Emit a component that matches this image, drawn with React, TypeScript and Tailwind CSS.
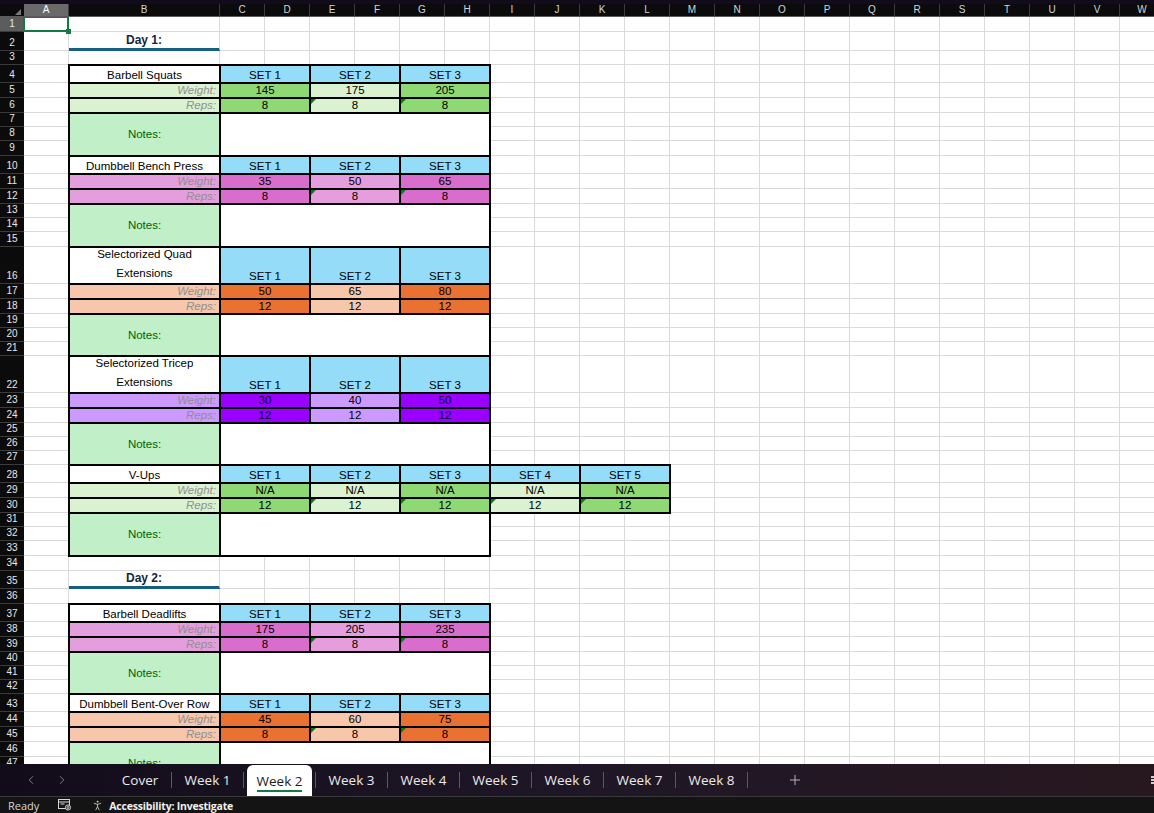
import type { ReactNode } from "react";
import { ChevronLeft, ChevronRight, Plus, PersonStanding } from "lucide-react";

const COLS = ["C", "D", "E", "F", "G", "H", "I", "J", "K", "L", "M", "N", "O", "P", "Q", "R", "S", "T", "U", "V", "W"];

type Tone = { dark: string; light: string };

const tones = {
  green: { dark: "bg-[#8ed973]", light: "bg-[#daf2d0]" },
  pink: { dark: "bg-[#d86dcd]", light: "bg-[#e59edd]" },
  orange: { dark: "bg-[#e97132]", light: "bg-[#f7c7ac]" },
  purple: { dark: "bg-[#9900ff]", light: "bg-[#cc99ff]" },
};

type Exercise = {
  start: number;
  name: string[];
  tone: Tone;
  weights: string[];
  reps: string[];
  flagged?: boolean;
  notes: string[];
};

const day1: Exercise[] = [
  { start: 4, name: ["Barbell Squats"], tone: tones.green, weights: ["145", "175", "205"], reps: ["8", "8", "8"], flagged: true, notes: ["h-[14px]", "h-[14px]", "h-[15px]"] },
  { start: 10, name: ["Dumbbell Bench Press"], tone: tones.pink, weights: ["35", "50", "65"], reps: ["8", "8", "8"], flagged: true, notes: ["h-[14px]", "h-[14px]", "h-[15px]"] },
  { start: 16, name: ["Selectorized Quad", "Extensions"], tone: tones.orange, weights: ["50", "65", "80"], reps: ["12", "12", "12"], notes: ["h-[14px]", "h-[14px]", "h-[14px]"] },
  { start: 22, name: ["Selectorized Tricep", "Extensions"], tone: tones.purple, weights: ["30", "40", "50"], reps: ["12", "12", "12"], notes: ["h-[14px]", "h-[14px]", "h-[14px]"] },
  { start: 28, name: ["V-Ups"], tone: tones.green, weights: ["N/A", "N/A", "N/A", "N/A", "N/A"], reps: ["12", "12", "12", "12", "12"], flagged: true, notes: ["h-[14px]", "h-[14px]", "h-[15px]"] },
];

const day2: Exercise[] = [
  { start: 37, name: ["Barbell Deadlifts"], tone: tones.pink, weights: ["175", "205", "235"], reps: ["8", "8", "8"], flagged: true, notes: ["h-[14px]", "h-[14px]", "h-[14px]"] },
  { start: 43, name: ["Dumbbell Bent-Over Row"], tone: tones.orange, weights: ["45", "60", "75"], reps: ["8", "8", "8"], flagged: true, notes: ["h-[15px]", "h-[14px]", "h-[14px]"] },
];

function RowHead({ n, selected }: { n: number; selected?: boolean }) {
  return (
    <div
      className={`flex w-[24px] shrink-0 items-end justify-center border-b border-[#3b3b3b] pb-[1px] text-[10px] leading-[12px] text-[#e8e8e8] ${
        selected ? "bg-[#5c5c5c]" : "bg-[#0b0b0b]"
      }`}
    >
      {n}
    </div>
  );
}

function Blank({ w = "w-[45px]" }: { w?: string }) {
  return <div className={`shrink-0 ${w} border-b border-r border-[#dadada] bg-white`} />;
}

function Blanks({ count }: { count: number }) {
  return (
    <>
      {Array.from({ length: count }, (_, i) => (
        <Blank key={i} />
      ))}
    </>
  );
}

function Row({ n, h, selected, children }: { n: number; h: string; selected?: boolean; children: ReactNode }) {
  return (
    <div className={`flex ${h}`}>
      <RowHead n={n} selected={selected} />
      {children}
    </div>
  );
}

function Box({
  w,
  bg,
  align = "items-end justify-center pb-[1px]",
  flag,
  children,
}: {
  w: string;
  bg: string;
  align?: string;
  flag?: boolean;
  children?: ReactNode;
}) {
  return (
    <div className={`relative flex shrink-0 ${w} ${bg} ${align} text-[11.5px] leading-[13px] text-black outline-2 -outline-offset-1 outline-black`}>
      {flag && (
        <span className="absolute left-[1px] top-[1px] h-0 w-0 border-r-[5px] border-t-[5px] border-r-transparent border-t-[#0b7a12]" />
      )}
      {children}
    </div>
  );
}

function NotesGroup({ start, heights }: { start: number; heights: string[] }) {
  return (
    <div className="flex">
      <div className="flex shrink-0 flex-col">
        {heights.map((h, i) => (
          <div key={i} className={`flex ${h}`}>
            <RowHead n={start + i} />
            <Blank />
          </div>
        ))}
      </div>
      <Box w="w-[151px]" bg="bg-[#c1f0c8]" align="items-center justify-center">
        <span className="text-[#006100]">Notes:</span>
      </Box>
      <Box w="w-[270px]" bg="bg-white" />
      <div className="flex shrink-0 flex-col">
        {heights.map((h, i) => (
          <div key={i} className={`flex ${h}`}>
            <Blanks count={15} />
          </div>
        ))}
      </div>
    </div>
  );
}

function ExerciseBlock({ ex }: { ex: Exercise }) {
  const rest = 21 - ex.weights.length * 2;
  const tall = ex.name.length > 1;
  return (
    <>
      <Row n={ex.start} h={tall ? "h-[37px]" : "h-[18px]"}>
        <Blank />
        <Box w="w-[151px]" bg="bg-white">
          <span className={`text-center ${tall ? "leading-[19px]" : ""}`}>
            {ex.name.map((line, i) => (
              <span key={i} className="block">
                {line}
              </span>
            ))}
          </span>
        </Box>
        {ex.weights.map((_, i) => (
          <Box key={i} w="w-[90px]" bg="bg-[#94dcf8]">
            SET {i + 1}
          </Box>
        ))}
        <Blanks count={rest} />
      </Row>
      <Row n={ex.start + 1} h="h-[15px]">
        <Blank />
        <Box w="w-[151px]" bg={ex.tone.light} align="items-end justify-end pb-[1px] pr-[4px]">
          <span className="italic text-[#8f8f8f]">Weight:</span>
        </Box>
        {ex.weights.map((v, i) => (
          <Box key={i} w="w-[90px]" bg={i % 2 === 0 ? ex.tone.dark : ex.tone.light}>
            {v}
          </Box>
        ))}
        <Blanks count={rest} />
      </Row>
      <Row n={ex.start + 2} h="h-[15px]">
        <Blank />
        <Box w="w-[151px]" bg={ex.tone.light} align="items-end justify-end pb-[1px] pr-[4px]">
          <span className="italic text-[#8f8f8f]">Reps:</span>
        </Box>
        {ex.reps.map((v, i) => (
          <Box key={i} w="w-[90px]" bg={i % 2 === 0 ? ex.tone.dark : ex.tone.light} flag={ex.flagged && i > 0}>
            {v}
          </Box>
        ))}
        <Blanks count={rest} />
      </Row>
      <NotesGroup start={ex.start + 3} heights={ex.notes} />
    </>
  );
}

function DayRow({ n, h, label }: { n: number; h: string; label: string }) {
  return (
    <Row n={n} h={h}>
      <Blank />
      <div className="flex w-[151px] shrink-0 items-end justify-center border-b-[3px] border-r border-b-[#156082] border-r-[#dadada] bg-white pb-[1px] text-[12px] font-bold leading-[14px] text-[#0e2841]">
        {label}
      </div>
      <Blanks count={21} />
    </Row>
  );
}

function EmptyRow({ n, h }: { n: number; h: string }) {
  return (
    <Row n={n} h={h}>
      <Blank />
      <Blank w="w-[151px]" />
      <Blanks count={21} />
    </Row>
  );
}

function ColumnHeaders() {
  return (
    <div className="flex h-[13px] shrink-0 border-b border-[#5a5a5a] bg-[#0b0b0b] text-[10px] leading-[12px] text-[#d4d4d4]">
      <div className="flex w-[24px] shrink-0 items-end justify-end pb-[1px] pr-[3px]">
        <span className="h-0 w-0 border-b-[6px] border-l-[6px] border-b-[#7a7a7a] border-l-transparent" />
      </div>
      <div className="flex w-[45px] shrink-0 items-center justify-center border-r border-[#3b3b3b] bg-[#6a6a6a] text-white">A</div>
      <div className="flex w-[151px] shrink-0 items-center justify-center border-r border-[#3b3b3b]">B</div>
      {COLS.map((c) => (
        <div key={c} className="flex w-[45px] shrink-0 items-center justify-center border-r border-[#3b3b3b]">
          {c}
        </div>
      ))}
    </div>
  );
}

const weeks = ["Week 1", "Week 2", "Week 3", "Week 4", "Week 5", "Week 6", "Week 7", "Week 8"];

function SheetTabs() {
  return (
    <div className="flex h-[32px] shrink-0 items-stretch bg-linear-to-r from-[#120c1a] via-[#1f1727] to-[#28171f] font-['Open_Sans',sans-serif] text-[13.5px] text-[#ececec]">
      <div className="flex w-[109px] shrink-0 items-center gap-[17px] pl-[24px] text-[#8c8c8c]">
        <ChevronLeft size={14} strokeWidth={1.5} />
        <ChevronRight size={14} strokeWidth={1.5} />
      </div>
      <div className="flex w-[62px] shrink-0 items-center justify-center">Cover</div>
      <span className="h-[16px] w-px self-center bg-[#5b5b5b]" />
      {weeks.map((w) => (
        <div key={w} className="flex shrink-0 items-stretch">
          {w === "Week 2" ? (
            <div className="mx-[3px] mt-[1px] flex w-[65px] items-center justify-center rounded-t-[6px] bg-white text-[#1b1b1b]">
              <span className="mt-[4px] border-b-2 border-[#107c41] leading-[17px]">{w}</span>
            </div>
          ) : (
            <div className="flex w-[71px] items-center justify-center">{w}</div>
          )}
          <span className="h-[16px] w-px self-center bg-[#5b5b5b]" />
        </div>
      ))}
      <div className="ml-[39px] flex items-center text-[#d0d0d0]">
        <Plus size={16} strokeWidth={1.25} />
      </div>
      <div className="ml-auto flex flex-col justify-center gap-[1px]">
        <span className="h-[2px] w-[3px] bg-[#cfcfcf]" />
        <span className="h-[2px] w-[3px] bg-[#cfcfcf]" />
        <span className="h-[2px] w-[3px] bg-[#cfcfcf]" />
      </div>
    </div>
  );
}

function StatusBar() {
  return (
    <div className="flex h-[17px] shrink-0 items-center border-t border-[#3a3a3a] bg-[#141414] pl-[8px] font-['Open_Sans',sans-serif] text-[11px] leading-[14px] text-[#d8d8d8]">
      <span className="mt-[2px]">Ready</span>
      <svg className="ml-[19px]" width="14" height="12" viewBox="0 0 14 12" fill="none" stroke="#d8d8d8" strokeWidth="1">
        <rect x="0.5" y="0.5" width="11" height="9" />
        <line x1="0.5" y1="3" x2="11.5" y2="3" />
        <line x1="2.5" y1="5" x2="6.5" y2="5" />
        <circle cx="10" cy="8.5" r="2.6" fill="#141414" />
        <circle cx="10" cy="8.5" r="1" />
      </svg>
      <PersonStanding className="ml-[19px]" size={13} strokeWidth={1.5} />
      <span className="ml-[5px] mt-[1px] text-[10.5px] font-bold tracking-[-0.2px] text-[#f0f0f0]">Accessibility: Investigate</span>
    </div>
  );
}

export default function App() {
  return (
    <div className="flex h-[813px] w-[1154px] flex-col overflow-hidden bg-white font-['Liberation_Sans',Arial,sans-serif]">
      <div className="h-[4px] shrink-0 bg-[#120b1b]" />
      <ColumnHeaders />
      <div className="min-h-0 flex-1 overflow-hidden">
        <Row n={1} h="h-[15px]" selected>
          <div className="relative w-[45px] shrink-0 border-b border-r border-[#dadada] bg-white">
            <div className="absolute -bottom-[1px] -left-[1px] -right-[1px] -top-[1px] border-2 border-[#107c41]" />
            <div className="absolute -bottom-[3px] -right-[3px] h-[5px] w-[5px] bg-[#107c41]" />
          </div>
          <Blank w="w-[151px]" />
          <Blanks count={21} />
        </Row>
        <DayRow n={2} h="h-[19px]" label="Day 1:" />
        <EmptyRow n={3} h="h-[14px]" />
        {day1.map((ex) => (
          <ExerciseBlock key={ex.start} ex={ex} />
        ))}
        <EmptyRow n={34} h="h-[15px]" />
        <DayRow n={35} h="h-[18px]" label="Day 2:" />
        <EmptyRow n={36} h="h-[15px]" />
        {day2.map((ex) => (
          <ExerciseBlock key={ex.start} ex={ex} />
        ))}
      </div>
      <SheetTabs />
      <StatusBar />
    </div>
  );
}
